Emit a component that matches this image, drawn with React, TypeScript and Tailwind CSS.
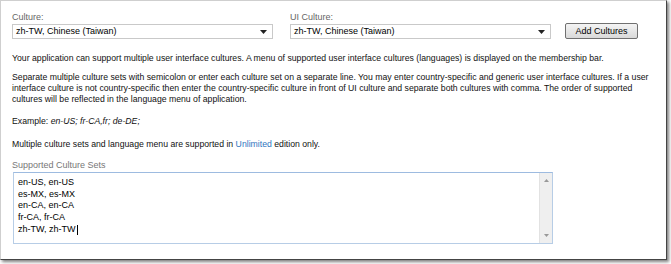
import React from 'react';

const Select = ({ value, className }: { value: string; className: string }) => (
  <div className={`${className} h-[15px] border border-[#c9c9c9] bg-white flex items-center justify-between pl-[3px] pr-[5px]`}>
    <span className="text-[9px] leading-none text-black">{value}</span>
    <svg width="7" height="4" viewBox="0 0 7 4">
      <path d="M0 0 L7 0 L3.5 4 Z" fill="#222" />
    </svg>
  </div>
);

const App: React.FC = () => {
  return (
    <div className="w-[671px] h-[264px] bg-white" style={{ fontFamily: '"Liberation Sans", Arial, sans-serif' }}>
      <div className="w-[667px] h-[260px] overflow-hidden border border-[#cfcfcf] border-r-[#444] border-b-[#444] shadow-[2px_2px_3px_rgba(0,0,0,0.5)] bg-white pl-[11px] pt-[10px]">
        {/* culture pickers */}
        <div className="flex items-end">
          <div className="flex flex-col">
            <span className="text-[9px] leading-[12px] text-[#666] mb-[1px]">Culture:</span>
            <Select value="zh-TW, Chinese (Taiwan)" className="w-[261px]" />
          </div>
          <div className="flex flex-col ml-[17px]">
            <span className="text-[9px] leading-[12px] text-[#666] mb-[1px]">UI Culture:</span>
            <Select value="zh-TW, Chinese (Taiwan)" className="w-[261px]" />
          </div>
          <button className="ml-[14px] w-[73px] h-[16px] rounded-[2px] border border-[#707070] bg-gradient-to-b from-[#f4f4f4] to-[#d9d9d9] text-[9px] leading-none text-black">
            Add Cultures
          </button>
        </div>

        <div className="text-[8.7px] leading-[11px] text-[#111] mt-[14px] flex flex-col whitespace-nowrap">
          <p>Your application can support multiple user interface cultures. A menu of supported user interface cultures (languages) is displayed on the membership bar.</p>
          <p className="mt-[8px]">
            Separate multiple culture sets with semicolon or enter each culture set on a separate line. You may enter country-specific and generic user interface cultures. If a user
            <br />
            interface culture is not country-specific then enter the country-specific culture in front of UI culture and separate both cultures with comma. The order of supported
            <br />
            cultures will be reflected in the language menu of application.
          </p>
          <p className="mt-[11px]">
            Example: <i>en-US; fr-CA,fr; de-DE;</i>
          </p>
          <p className="mt-[12px]">
            Multiple culture sets and language menu are supported in <span className="text-[#2f76c0]">Unlimited</span> edition only.
          </p>
        </div>

        <div className="mt-[9px] text-[9px] leading-[12px] text-[#777]">Supported Culture Sets</div>
        <div className="mt-[1px] ml-[1px] w-[540px] h-[72px] border border-[#b7cde6] border-t-[#9dbbe0] bg-white flex">
          <div className="flex-1 pl-[4px] pt-[4px] text-[9px] leading-[11.7px] text-black">
            <div>en-US, en-US</div>
            <div>es-MX, es-MX</div>
            <div>en-CA, en-CA</div>
            <div>fr-CA, fr-CA</div>
            <div className="flex items-center">
              zh-TW, zh-TW<span className="inline-block w-px h-[10px] bg-black ml-[1px]" />
            </div>
          </div>
          <div className="w-[13px] bg-[#efefef] border-l border-[#e2e2e2] flex flex-col items-center justify-between py-[6px]">
            <svg width="5" height="3" viewBox="0 0 5 3">
              <path d="M0 3 L5 3 L2.5 0 Z" fill="#999" />
            </svg>
            <svg width="5" height="3" viewBox="0 0 5 3">
              <path d="M0 0 L5 0 L2.5 3 Z" fill="#999" />
            </svg>
          </div>
        </div>
      </div>
    </div>
  );
};

export default App;
